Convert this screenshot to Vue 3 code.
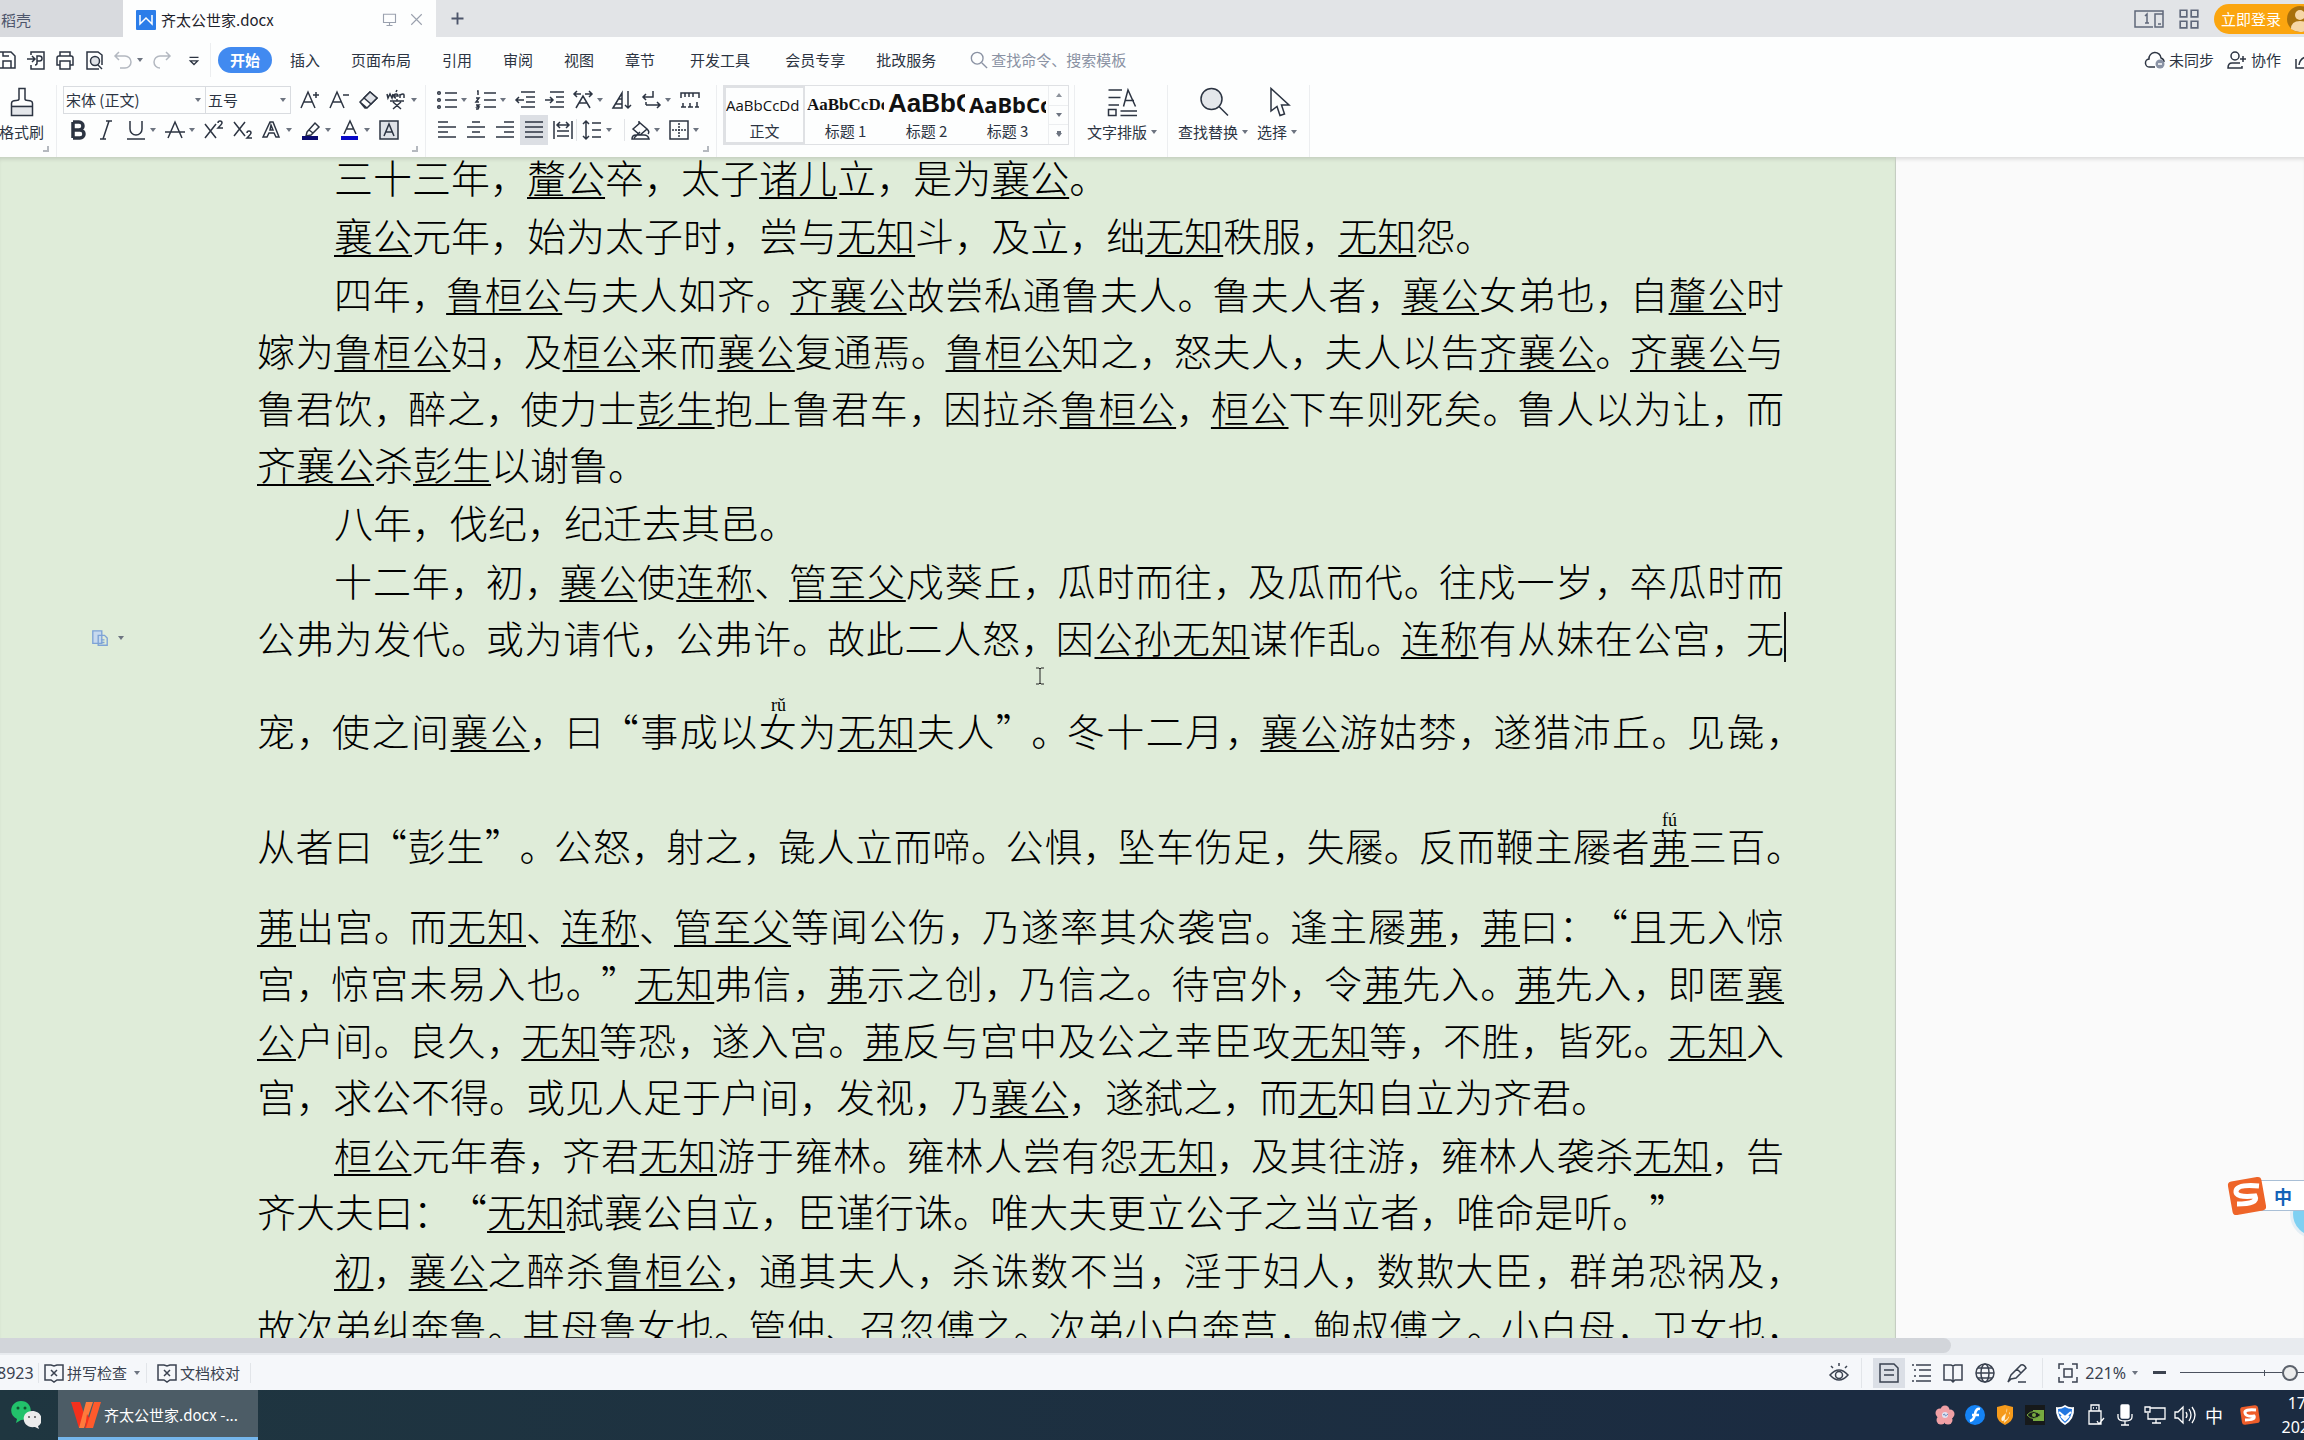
<script setup>
import { h } from 'vue'

const shapes = {
  save: '<path d="M2 2h12l4 4v12H2zM6 18v-7h8v7M6 2v4h6"/>',
  exportPdf: '<path d="M5 5V2h13v17H5v-4M1 9h8M6 6l3 3-3 3M11 6h2.500a2 2 0 010 5H11zM11 11v2a2 2 0 01-2 2"/>',
  print: '<path d="M5 6V2h10v4M5 15H2V8q0-2 2-2h12q2 0 2 2v7h-3M5 11h10v8H5z"/>',
  preview: '<path d="M15 19H3V2h11l4 3v10"/><circle cx="11" cy="11" r="4.500" fill="#dfe2e7"/><path d="M14 15l4 4"/>',
  undo: '<path d="M6 2L2 6l4 4M2 6h10a5.500 5.500 0 010 12H7"/>',
  redo: '<path d="M14 2l4 4-4 4M18 6H8a5.500 5.500 0 000 12"/>',
  more: '<path d="M5 7h10M6 11l4 4 4-4z"/>',
  search: '<circle cx="8" cy="8" r="6.500"/><path d="M13 13l6 6"/>',
  grow: '<path d="M1 18L8 2l7 16M4 12h8M16 2v6M13 5h6"/>',
  shrink: '<path d="M1 18L8 2l7 16M4 12h8M14 5h6"/>',
  eraser: '<path d="M2 12L12 2l7 6L9 18H7zM2 12l7 6"/><path d="M6 8l7 6 6-6-7-6z" fill="#dfe2e7"/>',
  pinyin: '<path d="M0 4l1 4 2-4 2 4 1-4M7 6h4q0-2-2-2t-2 2 2 2M13 8V4M13 5q4-2 4 0v3M9 2l1-2M3 11h14M10 9v2M6 12l8 7M14 12l-8 7"/>',
  bullets: '<path d="M8 3h12M8 10h12M8 17h12"/><circle cx="2" cy="3" r="1.300"/><circle cx="2" cy="10" r="1.300"/><circle cx="2" cy="17" r="1.300"/>',
  numbers: '<path d="M8 3h12M8 10h12M8 17h12M1 1h1v4M0 8h3l-3 4h3M0 15h3l-2 2h2l-1 2H0"/>',
  outdent: '<path d="M6 2h14M11 7h9M11 12h9M6 17h14M1 10h8M4 7l-3 3 3 3"/>',
  indent: '<path d="M6 2h14M12 7h8M12 12h8M6 17h14M1 10h8M6 7l3 3-3 3"/>',
  scaleA: '<path d="M3 18l7-12 7 12M6 13h8M1 4h7M4 1L1 4l3 3M12 4h7M16 1l3 3-3 3"/>',
  sort: '<path d="M1 18L10 3v15zM4 14h6M7 9h3"/><path d="M16 1v17M13 15l3 3 3-3"/>',
  breaks: '<path d="M12 1v6H2M5 4L2 7l3 3M5 15h14M16 12l3 3-3 3M5 12v3"/>',
  ruler: '<path d="M1 8V3h18v5M5 3v4M9 3v4M13 3v4M1 17h5M3 13v4M8 17h5M10 13v4M15 17h4M17 12v5"/>',
  bold: '<path stroke-width="3.500" d="M5 2v16M5 2h6a3.500 3.500 0 010 8H5h7a4 4 0 010 8H5"/>',
  italic: '<path d="M9 1h6M3 19h6M12 1L6 19"/>',
  underline: '<path d="M4 1v8a6 6 0 0012 0V1M1 19h18"/>',
  strike: '<path d="M3 18l7-16 7 16M0 12h20"/>',
  sup: '<path d="M1 4l11 14M12 4L1 18M14 3q0-2 2-2t2 2q0 1-4 5h5"/>',
  sub: '<path d="M1 2l11 14M12 2L1 16M14 13q0-2 2-2t2 2q0 1-4 5h5"/>',
  fx: '<path d="M1 17L8 2h3l6 15h-3l-2-4H7l-2 4zM8 10h3L9 5z"/>',
  marker: '<path d="M6 12l8-9 4 4-8 8-5 1zM8 10l4 3"/><path d="M1 18h16" stroke="#0b0b70" stroke-width="4"/>',
  color: '<path d="M4 14L10 1l6 13M6 9h8"/><path d="M1 18h17" stroke="#0808c8" stroke-width="4"/>',
  boxed: '<path d="M1 1h18v18H1z" fill="#dfe2e7"/><path d="M5 16l5-12 5 12M7 12h6"/>',
  left: '<path d="M1 2h10M1 7h18M1 12h10M1 17h18"/>',
  center: '<path d="M6 2h8M1 7h18M6 12h8M1 17h18"/>',
  right: '<path d="M9 2h10M1 7h18M9 12h10M1 17h18"/>',
  justify: '<path d="M1 2h18M1 7h18M1 12h18M1 17h18"/>',
  distribute: '<path d="M1 1v18M19 1v18M4 11h12M4 16h12M4 5h12M7 2L4 5l3 3M13 2l3 3-3 3"/>',
  spacing: '<path d="M4 1v18M1 4l3-3 3 3M1 16l3 3 3-3M10 3h9M10 10h9M10 17h9"/>',
  shading: '<path d="M3 9l7-6 7 6-7 6zM9 1v4M17 9q3 3 1 5M2 19q0-4 4-4h8q4 0 5 4zM4 18l6-6"/>',
  borders: '<path d="M1 1h18v18H1z"/><path d="M10 3v14M3 10h14" stroke-dasharray="2 1"/>',
  monitor: '<path d="M2 3h16v11H2zM10 14v4M6 18h8"/>',
  close: '<path d="M3 3l14 14M17 3L3 17"/>',
  plus: '<path stroke-width="2.500" d="M10 2v16M2 10h16"/>',
  apps: '<path d="M2 2h6v6H2zM12 2h6v6h-6zM2 12h6v6H2zM12 12h6v6h-6z"/>',
  cloud: '<path d="M10 17H5a4 4 0 01-1-8 6 6 0 0112-1q3 1 3 4"/><circle cx="15" cy="14" r="4.500" fill="#8a93a5" stroke="none"/><path stroke="#fff" d="M13 14h4"/>',
  person: '<circle cx="8" cy="6" r="4"/><path d="M13 13H5q-4 0-4 5h14v-2M13 9h6M16 6v6"/>',
  share: '<path d="M2 9v9h17M5 15q1-9 13-9"/>',
  spell: '<path d="M1 2h6l3 1 3-1h6v15h-6l-3 2-3-2H1z"/><path d="M7 7l6 6M13 7l-6 6"/>',
  eye: '<path d="M1 12q9-10 18 0-9 10-18 0zM10 0v3M2 3l2 2M18 3l-2 2"/><circle cx="10" cy="12" r="3.500"/>',
  page: '<path d="M1 1h14l4 4v14H1zM5 7h10M5 12h10"/>',
  outline: '<path d="M5 2h15M8 7h12M8 13h12M5 18h15M1 2h2M3 7h2M3 13h2M1 18h2"/>',
  book: '<path d="M1 2h7l2 1 2-1h7v15h-7l-2 2-2-2H1zM10 3v15"/>',
  globe: '<circle cx="10" cy="10" r="9"/><ellipse cx="10" cy="10" rx="4" ry="9"/><path d="M1 10h18M3 5h14M3 15h14"/>',
  pen: '<path d="M1 19l3-7L14 2q3-1 5 3L9 15l-5 1zM10 6l4 4M11 19h8"/>',
  fit: '<path d="M1 6V1h5M14 1h5v5M19 14v5h-5M6 19H1v-5M6 6h8v8H6z"/>',
  paste: '<path d="M2 2h10v14H2z" fill="#c7d9ee"/><path d="M8 7h7l3 3v8H8zM11 12h4M11 15h4"/>',
  brush: '<path d="M3 12h14v7H3z" fill="#e4e7eb" stroke="none"/><path d="M8 1h4v7q0 1 2 1 3 0 3 2v8H3v-8q0-2 3-2 2 0 2-1zM3 13h14"/>',
  layout: '<path d="M1 2h9M1 7h8M1 12h7M11 13l3-11 5 11M12 9h6M9 16h11M9 19h11M1 15h5v4H1z"/>',
  find: '<circle cx="9" cy="8" r="7" fill="#e4e7eb"/><path d="M14 13l6 6"/>',
  arrow: '<path d="M6 1v15l4-3 2 6 3-1-2-6h5z"/>',
}

const Icon = (p) =>
  h('svg', { class: 'icon', viewBox: '0 0 20 20', 'aria-hidden': 'true', innerHTML: shapes[p.name] })
Icon.props = ['name']

const quick = [['save', '保存'], ['exportPdf', '输出为PDF'], ['print', '打印'], ['preview', '打印预览']]
const menus = ['插入', '页面布局', '引用', '审阅', '视图', '章节', '开发工具', '会员专享', '批改服务']

const fontTop = [['grow'], ['shrink'], ['eraser'], ['pinyin', 1]]
const fontBottom = [['bold'], ['italic'], ['underline', 1], ['strike', 1], ['sup'], ['sub'], ['fx', 1], ['marker', 1], ['color', 1], ['boxed']]
const paraTop = [['bullets', 1], ['numbers', 1], ['outdent'], ['indent'], ['scaleA', 1], ['sort'], ['breaks', 1], ['ruler']]
const paraBottom = [['left'], ['center'], ['right'], ['justify'], ['distribute'], ['spacing', 2], ['shading', 2], ['borders', 1]]

const styles = [['AaBbCcDd', '正文', 'body'], ['AaBbCcDd', '标题 1', 'h1'], ['AaBbCcDd', '标题 2', 'h2'], ['AaBbCcDd', '标题 3', 'h3']]
const views = [['page', '页面视图'], ['outline', '大纲'], ['book', '阅读版式'], ['globe', 'Web版式'], ['pen', '写作模式']]

// Markup of a line: [name] is underlined, {字|pinyin} carries a phonetic guide.
const paragraphs = [
  ['三十三年，[釐公]卒，太子[诸儿]立，是为[襄公]。'],
  ['[襄公]元年，始为太子时，尝与[无知]斗，及立，绌[无知]秩服，[无知]怨。'],
  [
    '四年，[鲁桓公]与夫人如齐。[齐襄公]故尝私通鲁夫人。鲁夫人者，[襄公]女弟也，自[釐公]时',
    '嫁为[鲁桓公]妇，及[桓公]来而[襄公]复通焉。[鲁桓公]知之，怒夫人，夫人以告[齐襄公]。[齐襄公]与',
    '鲁君饮，醉之，使力士[彭生]抱上鲁君车，因拉杀[鲁桓公]，[桓公]下车则死矣。鲁人以为让，而',
    '[齐襄公]杀[彭生]以谢鲁。',
  ],
  ['八年，伐纪，纪迁去其邑。'],
  [
    '十二年，初，[襄公]使[连称]、[管至父]戍葵丘，瓜时而往，及瓜而代。往戍一岁，卒瓜时而',
    '公弗为发代。或为请代，公弗许。故此二人怒，因[公孙无知]谋作乱。[连称]有从妹在公宫，无',
    '宠，使之间[襄公]，曰“事成以{女|rǔ}为[无知]夫人”。冬十二月，[襄公]游姑棼，遂猎沛丘。见彘，',
    '从者曰“彭生”。公怒，射之，彘人立而啼。公惧，坠车伤足，失屦。反而鞭主屦者[{茀|fú}]三百。',
    '[茀]出宫。而[无知]、[连称]、[管至父]等闻公伤，乃遂率其众袭宫。逢主屦[茀]，[茀]曰：“且无入惊',
    '宫，惊宫未易入也。”[无知]弗信，[茀]示之创，乃信之。待宫外，令[茀]先入。[茀]先入，即匿[襄]',
    '[公]户间。良久，[无知]等恐，遂入宫。[茀]反与宫中及公之幸臣攻[无知]等，不胜，皆死。[无知]入',
    '宫，求公不得。或见人足于户间，发视，乃[襄公]，遂弑之，而[无]知自立为齐君。',
  ],
  [
    '[桓公]元年春，齐君[无知]游于雍林。雍林人尝有怨[无知]，及其往游，雍林人袭杀[无知]，告',
    '齐大夫曰：“[无知]弑襄公自立，臣谨行诛。唯大夫更立公子之当立者，唯命是听。”',
  ],
  [
    '[初]，[襄公]之醉杀[鲁桓公]，通其夫人，杀诛数不当，淫于妇人，数欺大臣，群弟恐祸及，',
    '故次弟纠奔鲁。其母鲁女也。管仲、召忽傅之。次弟小白奔莒，鲍叔傅之。小白母，卫女也，',
  ],
]

const spaceAbove = { 宠: 'rise-m', 从: 'rise-l' }

function parse(text) {
  const out = []
  let name = false
  for (const t of text.match(/\{[^}]+\}|[[\]]|[，。、：”“]|[^{[\]，。、：”“]+/g)) {
    if (t === '[') name = true
    else if (t === ']') name = false
    else if (t[0] === '{') {
      const [base, guide] = t.slice(1, -1).split('|')
      out.push({ t: base, guide, name })
    } else out.push({ t, name, mark: t === '“' ? 'open' : /[，。、：”]/.test(t) ? 'mark' : '' })
  }
  return out
}

const content = paragraphs.map((lines, p) =>
  lines.map((text, i) => ({
    parts: parse(text),
    full: i < lines.length - 1 || p === paragraphs.length - 1,
    rise: spaceAbove[text[0]] || (text.startsWith('[茀]出') ? 'rise-s' : ''),
    caret: text.endsWith('公宫，无'),
  })),
)
</script>

<template>
  <div class="app">
    <header class="tabs">
      <button class="tab idle">稻壳</button>
      <div class="tab active">
        <svg class="wlogo" viewBox="0 0 20 20"><rect width="20" height="20" rx="1" fill="#2b7de9" /><path d="M4 5v9l6-6 6 6V5" fill="none" stroke="#fff" stroke-width="1.500" /></svg>
        <span class="title">齐太公世家.docx</span>
        <button class="mini" aria-label="窗口"><Icon name="monitor" /></button>
        <button class="mini" aria-label="关闭"><Icon name="close" /></button>
      </div>
      <button class="add" aria-label="新建"><Icon name="plus" /></button>
      <div class="account">
        <button class="wide" aria-label="窗口布局">
          <svg viewBox="0 0 30 18" width="30" height="18" fill="none" stroke="#5f677a" stroke-width="1.500"><path d="M19 17H1V1h28v16h-3M21 4h8v13h-8zM24 14h3M11 6l2-2v9M11 13h4" /></svg>
        </button>
        <button class="mini dark" aria-label="应用"><Icon name="apps" /></button>
        <button class="login">立即登录
          <svg viewBox="0 0 26 26" width="26" height="26"><circle cx="13" cy="13" r="13" fill="#a8700c" /><circle cx="13" cy="9" r="5" fill="#f6d6a6" /><path d="M4 23q0-8 9-8t9 8q-9 6-18 0z" fill="#f6d6a6" /></svg>
        </button>
      </div>
    </header>

    <nav class="menu">
      <div class="quick">
        <button v-for="q in quick" :key="q[0]" class="tb" :aria-label="q[1]"><Icon :name="q[0]" /></button>
        <button class="tb dd faint" aria-label="撤销"><Icon name="undo" /><i class="caret"></i></button>
        <button class="tb faint" aria-label="恢复"><Icon name="redo" /></button>
        <button class="tb last" aria-label="更多"><Icon name="more" /></button>
      </div>
      <button class="pill">开始</button>
      <button v-for="m in menus" :key="m" class="item" :class="{ roomy: m === '开发工具' || m === '会员专享' }">{{ m }}</button>
      <label class="find"><Icon name="search" /><input type="text" placeholder="查找命令、搜索模板" aria-label="查找命令" /></label>
      <div class="cloud">
        <button><Icon name="cloud" />未同步</button>
        <button><Icon name="person" />协作</button>
        <button aria-label="分享"><Icon name="share" /></button>
      </div>
    </nav>

    <section class="ribbon">
      <div class="group clip">
        <button class="big"><Icon name="brush" /><span>格式刷</span></button>
        <b class="corner"></b>
      </div>
      <div class="group font">
        <div class="row">
          <div class="combo">
            <span class="pick family"><select aria-label="字体"><option>宋体 (正文)</option></select><i class="caret"></i></span>
            <span class="pick size"><select aria-label="字号"><option>五号</option></select><i class="caret"></i></span>
          </div>
          <button v-for="t in fontTop" :key="t[0]" class="tb" :class="{ dd: t[1] }" :aria-label="t[0]"><Icon :name="t[0]" /><i v-if="t[1]" class="caret"></i></button>
        </div>
        <div class="row lower">
          <button v-for="t in fontBottom" :key="t[0]" class="tb" :class="{ dd: t[1] }" :aria-label="t[0]"><Icon :name="t[0]" /><i v-if="t[1]" class="caret"></i></button>
        </div>
        <b class="corner"></b>
      </div>
      <div class="group para">
        <div class="row">
          <button v-for="t in paraTop" :key="t[0]" class="tb" :class="{ dd: t[1] }" :aria-label="t[0]"><Icon :name="t[0]" /><i v-if="t[1]" class="caret"></i></button>
        </div>
        <div class="row">
          <button v-for="t in paraBottom" :key="t[0]" class="tb" :class="{ dd: t[1], split: t[1] === 2, on: t[0] === 'justify' }" :aria-label="t[0]"><Icon :name="t[0]" /><i v-if="t[1]" class="caret"></i></button>
        </div>
        <b class="corner"></b>
      </div>
      <div class="group gallery-wrap">
        <div class="gallery">
          <button v-for="s in styles" :key="s[1]" class="style" :class="s[2]"><span class="sample">{{ s[0] }}</span><span class="label">{{ s[1] }}</span></button>
          <div class="scroller">
            <button aria-label="上一行"><i class="caret up"></i></button>
            <button aria-label="下一行"><i class="caret"></i></button>
            <button aria-label="展开"><i class="caret bar"></i></button>
          </div>
        </div>
      </div>
      <div class="group type">
        <button class="big"><Icon name="layout" /><span>文字排版<i class="caret"></i></span></button>
      </div>
      <div class="group edit">
        <button class="big"><Icon name="find" /><span>查找替换<i class="caret"></i></span></button>
        <button class="big"><Icon name="arrow" /><span>选择<i class="caret"></i></span></button>
      </div>
    </section>

    <main class="desk">
      <article class="sheet">
        <button class="paste" aria-label="粘贴选项"><Icon name="paste" /><i class="caret"></i></button>
        <div v-for="(p, i) in content" :key="i" class="p">
          <div v-for="(l, j) in p" :key="j" class="line" :class="[l.rise, { full: l.full, first: j === 0 }]"><template v-for="(s, k) in l.parts" :key="k"><ruby v-if="s.guide" :class="{ name: s.name }">{{ s.t }}<rt>{{ s.guide }}</rt></ruby><span v-else :class="[s.mark, { name: s.name }]">{{ s.t }}</span></template><i v-if="l.caret" class="cursor"></i></div>
        </div>
        <svg class="ibeam" viewBox="0 0 8 18" width="8" height="18"><path d="M0 1h3l1 1 1-1h3M0 17h3l1-1 1 1h3M4 2v14" fill="none" stroke="#222" /></svg>
      </article>
      <div class="ime">
        <svg viewBox="0 0 40 40" width="40" height="40"><rect x="3" y="3" width="34" height="34" rx="4" fill="#ee6428" transform="rotate(-10 20 20)" /><path d="M32 10Q10 8 9 15t19 5q4 8-18 8" fill="none" stroke="#fff" stroke-width="5" /></svg>
        <span>中</span>
      </div>
      <div class="bubble"></div>
    </main>

    <div class="hscroll"><div class="thumb"></div></div>

    <footer class="status">
      <span class="count">8923</span>
      <button class="check"><Icon name="spell" />拼写检查<i class="caret"></i></button>
      <button class="check"><Icon name="spell" />文档校对</button>
      <div class="views">
        <button class="view eye" aria-label="护眼模式"><Icon name="eye" /></button>
        <button v-for="v in views" :key="v[0]" class="view" :class="{ on: v[0] === 'page' }" :aria-label="v[1]"><Icon :name="v[0]" /></button>
        <button class="view fit" aria-label="适应窗口"><Icon name="fit" /></button>
        <button class="zoom">221%<i class="caret"></i></button>
        <button class="minus" aria-label="缩小"></button>
        <input class="range" type="range" min="0" max="100" value="62" aria-label="缩放" />
      </div>
    </footer>

    <div class="taskbar">
      <button class="wechat" aria-label="微信">
        <svg viewBox="0 0 30 28" width="30" height="28"><path d="M10 0c13 0 13 19 0 19l-5 3 1-4C-4 13 0 0 10 0z" fill="#22c26b" /><circle cx="7" cy="7" r="1.500" fill="#11552f" /><circle cx="14" cy="7" r="1.500" fill="#11552f" /><path d="M21 10c11 0 12 12 6 15l1 3-4-2c-14 2-15-16-3-16z" fill="#ececec" /><circle cx="18" cy="16" r="1" fill="#555" /><circle cx="24" cy="16" r="1" fill="#555" /></svg>
      </button>
      <button class="task">
        <svg viewBox="0 0 30 28" width="30" height="28"><path d="M0 1h9l6 17-2 9H8z" fill="#f5301d" /><path d="M15 1h7l-9 26H8z" fill="#ff7a3c" /><path d="M16 13l4 7-2 7h-4z" fill="#f5301d" /><path d="M23 1h7l-8 26h-7z" fill="#ff5a2c" /></svg>
        <span>齐太公世家.docx -...</span>
      </button>
      <div class="tray">
        <svg viewBox="0 0 20 20"><g fill="#f0a0a5"><circle cx="10" cy="5" r="4.500" /><circle cx="15" cy="9" r="4.500" /><circle cx="13" cy="15" r="4.500" /><circle cx="6" cy="15" r="4.500" /><circle cx="5" cy="8" r="4.500" /></g><circle cx="10" cy="10" r="3" fill="#dfe3f2" /><path d="M8 10q2-2 2 0t3-1" stroke="#6a86b8" fill="none" /></svg>
        <svg viewBox="0 0 20 20"><circle cx="10" cy="10" r="10" fill="#1583f5" /><path d="M15 4q-4-1-5 5t-5 7M7 10h7" stroke="#fff" stroke-width="2.500" fill="none" /></svg>
        <svg viewBox="0 0 20 20"><path d="M2 2l8-2 8 2v9q0 5-8 9-8-4-8-9z" fill="#f59a1b" /><path d="M12 3q1 4-3 7t-2 6q7-1 8-8l-1-1q2 6-5 11" fill="#fff3d8" /></svg>
        <svg viewBox="0 0 20 20"><rect width="20" height="20" fill="#16191a" /><path d="M8 5h11v11H8z" fill="#76a940" /><path d="M2 10q6-7 14 0-8 7-14 0z" fill="#16191a" stroke="#76a940" /><circle cx="9" cy="10" r="2" fill="#76a940" /></svg>
        <svg viewBox="0 0 20 20"><path d="M1 2q5 1 9-2 4 3 9 2 1 12-9 18Q0 14 1 2z" fill="#fff" /><path d="M3 4q4 0 7-2 3 2 7 2 0 9-7 14Q3 13 3 4z" fill="#2277e0" /><path d="M4 7l6 5 6-5M6 11l4 4 4-4" stroke="#fff" stroke-width="2" fill="none" /></svg>
        <svg viewBox="0 0 20 20" class="line-art"><path d="M6 6V0h8v6M4 6h12v13H4zM8 3h1M11 3h1M12 16l2 3 5-6" /></svg>
        <svg viewBox="0 0 20 20" class="line-art"><rect x="6" y="0" width="8" height="13" rx="1" fill="#fff" /><path d="M3 9v3q0 4 7 4t7-4V9M10 16v4M6 20h8" /></svg>
        <svg viewBox="0 0 20 20" class="line-art"><path d="M5 3h15v11H3V8M0 2h5v5H0zM11 14v4M7 18h9" /></svg>
        <svg viewBox="0 0 20 20" class="line-art"><path d="M0 7h3l5-5v16l-5-5H0zM11 7q2 3 0 6M14 4q4 6 0 12M17 2q6 8 0 16" /></svg>
        <span class="lang">中</span>
        <svg viewBox="0 0 20 20" class="sogou"><rect x="1" y="1" width="18" height="18" rx="3" fill="#ee5d2a" transform="rotate(-8 10 10)" /><path d="M16 5Q4 4 5 8t9 3q2 4-9 4" fill="none" stroke="#fff" stroke-width="3" /></svg>
        <div class="clock"><span>17</span><span>202</span></div>
      </div>
    </div>
  </div>
</template>

<style>
body {
  margin: 0;
  overflow: hidden;
}
</style>

<style scoped>
.app {
  display: flex;
  flex-direction: column;
  height: 100vh;
  overflow: hidden;
  font: 15px/20px "Noto Sans CJK SC", sans-serif;
  color: #2c3442;
  background: #fdfefe;
}
button, input, select {
  font: inherit;
  color: inherit;
  border: 0;
  padding: 0;
  margin: 0;
  background: none;
  outline: 0;
  white-space: nowrap;
}
button {
  display: flex;
  align-items: center;
  flex: none;
}
:deep(.icon) {
  width: 20px;
  height: 20px;
  flex: none;
  fill: none;
  stroke: currentColor;
  stroke-width: 1.5;
  overflow: visible;
}
.caret {
  flex: none;
  display: inline-block;
  border: 3px solid transparent;
  border-top: 4px solid #6d7480;
  border-bottom: 0;
}
.caret.up {
  border-top: 0;
  border-bottom: 4px solid #8d939c;
}
.caret.bar {
  box-shadow: 0 -3px 0 -1px #6d7480;
}

.tabs {
  display: flex;
  flex: none;
  height: 37px;
  background: #e2e4e7;
}
.tab {
  display: flex;
  align-items: center;
  box-sizing: border-box;
}
.tab.idle {
  width: 123px;
  padding: 2px 0 0 1px;
  background: #d8dade;
  color: #4d556b;
}
.tab.active {
  width: 313px;
  padding: 2px 12px 0 13px;
  background: #fdfefe;
  color: #1d222b;
}
.wlogo {
  width: 20px;
  height: 20px;
  margin-right: 5px;
}
.title {
  flex: 1;
}
.mini {
  margin-left: 12px;
  color: #9aa1ae;
}
.mini :deep(.icon) {
  width: 15px;
  height: 15px;
}
.mini.dark {
  margin: 0;
  color: #5f677a;
}
.mini.dark :deep(.icon) {
  width: 22px;
  height: 22px;
}
.add {
  margin-left: 14px;
  color: #4d556b;
}
.add :deep(.icon) {
  width: 15px;
  height: 15px;
}
.account {
  display: flex;
  align-items: center;
  margin-left: auto;
  gap: 14px;
}
.login {
  height: 30px;
  padding: 0 0 0 7px;
  gap: 6px;
  border-radius: 15px 0 0 15px;
  background: #fba50f;
  color: #fff;
  margin-right: -9px;
}

.menu {
  display: flex;
  flex: none;
  align-items: center;
  height: 46px;
}
.quick {
  display: flex;
  align-items: center;
  gap: 9px;
  width: 214px;
  margin: 0 7px 0 -3px;
  box-sizing: border-box;
  border-right: 1px solid #eceef0;
  height: 34px;
}
.tb {
  width: 20px;
  height: 22px;
}
.tb.dd {
  width: 30px;
  gap: 4px;
}
.faint {
  color: #b3b8c0;
}
.last {
  margin-left: 4px;
}
.last :deep(.icon) {
  width: 18px;
  height: 18px;
}
.pill {
  height: 26px;
  padding: 0 12px;
  margin-right: 3px;
  border-radius: 13px;
  background: #418af0;
  color: #fff;
  font-weight: 700;
}
.item {
  padding: 0 15px;
  margin-right: 1px;
}
.item.roomy {
  margin-left: 4px;
}
.find {
  display: flex;
  align-items: center;
  gap: 3px;
  margin-left: 18px;
  color: #8a92a3;
}
.find :deep(.icon) {
  width: 18px;
  height: 18px;
}
.find input {
  width: 180px;
}
.find input::placeholder {
  color: #8a92a3;
  opacity: 1;
}
.cloud {
  display: flex;
  gap: 13px;
  margin-left: auto;
  margin-right: -10px;
}
.cloud button {
  gap: 4px;
}

.ribbon {
  display: flex;
  flex: none;
  height: 74px;
  padding-top: 2px;
  box-sizing: border-box;
}
.group {
  position: relative;
  display: flex;
  flex: none;
  box-sizing: border-box;
  border-right: 1px solid #eceef0;
}
.corner {
  position: absolute;
  right: 7px;
  bottom: 5px;
  width: 4px;
  height: 4px;
  border: solid #b5b9bf;
  border-width: 0 2px 2px 0;
}
.clip {
  width: 57px;
}
.clip .big {
  margin-left: -1px;
}
.big {
  flex-direction: column;
  gap: 5px;
  padding-top: 2px;
}
.big :deep(.icon) {
  width: 30px;
  height: 30px;
  stroke-width: 1;
}
.big span {
  display: flex;
  align-items: center;
}
.big .caret {
  margin-left: 4px;
}
.font, .para {
  flex-direction: column;
}
.font {
  width: 369px;
  padding-left: 6px;
}
.para {
  width: 291px;
  padding-left: 11px;
}
.row {
  display: flex;
  align-items: center;
  gap: 9px;
  height: 30px;
}
.row.lower {
  padding-left: 5px;
}
.combo {
  display: flex;
  width: 228px;
  height: 28px;
  border: 1px solid #d9dce0;
  box-sizing: border-box;
}
.pick {
  display: flex;
  align-items: center;
  padding: 0 4px 0 2px;
}
.pick select {
  flex: 1;
  appearance: none;
}
.family {
  flex: 1;
  border-right: 1px solid #d9dce0;
}
.size {
  width: 78px;
}
.tb.on {
  background: #dcdfe4;
  box-shadow: 0 0 0 4px #dcdfe4;
}
.split {
  position: relative;
}
.split::before {
  content: "";
  position: absolute;
  left: -6px;
  height: 22px;
  border-left: 1px solid #e2e4e7;
}
.split + .split {
  margin-left: 9px;
}
.gallery-wrap {
  width: 358px;
  padding-left: 6px;
}
.gallery {
  display: flex;
  width: 346px;
  height: 60px;
  border: 1px solid #dfe1e4;
  box-sizing: border-box;
}
.style {
  flex-direction: column;
  width: 81px;
  padding: 0 2px;
  box-sizing: border-box;
  overflow: hidden;
}
.sample {
  display: block;
  width: 100%;
  height: 36px;
  overflow: hidden;
  text-align: left;
  line-height: 36px;
  color: #111;
}
.style.body {
  border: 2px solid #dfe1e4;
  padding: 0;
}
.body .sample {
  height: 34px;
  font: 15px/34px "Open Sans", sans-serif;
}
.h1 .sample {
  font: bold 17px/38px "Liberation Serif", serif;
}
.h2 .sample {
  font: bold 26px/34px "Liberation Sans", sans-serif;
}
.h3 .sample {
  font: bold 22px/36px "Noto Sans", sans-serif;
}
.label {
  line-height: 18px;
}
.scroller {
  display: flex;
  flex: 1;
  flex-direction: column;
  border-left: 1px solid #eceef0;
}
.scroller button {
  flex: 1;
  justify-content: center;
}
.scroller button + button {
  border-top: 1px solid #eceef0;
}
.type {
  width: 93px;
  padding-left: 12px;
}
.edit {
  width: 142px;
  padding-left: 10px;
  gap: 9px;
}

.desk {
  position: relative;
  flex: 1;
  min-height: 0;
  overflow: hidden;
  background: #fafafa;
  box-shadow: inset 0 4px 4px -2px #0002;
}
.sheet {
  position: relative;
  width: 82.3%;
  height: 100%;
  box-sizing: border-box;
  padding: 0 111px 0 257px;
  background: #dfecd9;
  border-right: 1px solid #c5cdc2;
  overflow: hidden;
  color: #000;
  font-weight: 300;
  box-shadow: inset 0 4px 4px -2px #0002;
}
.p {
  margin-bottom: 1px;
}
.p:first-of-type {
  margin-top: -9px;
}
.line {
  position: relative;
  height: 57px;
  font-size: 39px;
  line-height: 57px;
  white-space: nowrap;
  text-spacing-trim: space-all;
}
.line.full {
  font-size: 38px;
  text-align-last: justify;
}
.line.first {
  padding-left: 77px;
}
.rise-s {
  padding-top: 23px;
}
.rise-m {
  padding-top: 36px;
}
.rise-l {
  padding-top: 58px;
}
.mark {
  margin-right: -2px;
}
.open {
  margin-left: -2px;
}
.full .mark {
  margin-right: -4px;
}
.full .open {
  margin-left: -4px;
}
.full .mark:last-child {
  margin-right: -20px;
}
.name {
  text-decoration: underline 2px;
  text-underline-offset: 4px;
  text-decoration-skip-ink: none;
}
ruby {
  display: inline;
  position: relative;
}
rt {
  display: block;
  position: absolute;
  left: 0;
  top: -6px;
  width: 100%;
  font: 18px/18px "Liberation Serif", serif;
  text-align: center;
  text-align-last: center;
}
.cursor {
  position: absolute;
  right: -2px;
  top: 4px;
  height: 50px;
  border-left: 2px solid #111;
}
.ibeam {
  position: absolute;
  left: 1036px;
  top: 510px;
}
.paste {
  position: absolute;
  left: 91px;
  top: 472px;
  gap: 9px;
  color: #7ea3d6;
}
.paste :deep(.icon) {
  width: 18px;
  height: 18px;
}
.ime {
  position: absolute;
  right: 0;
  top: 1023px;
  display: flex;
  align-items: center;
  width: 57px;
  height: 31px;
  border: 1px solid #a9bfd6;
  border-right: 0;
  box-sizing: border-box;
  background: #fff;
  color: #1462b8;
  font-size: 18px;
  font-weight: 700;
  z-index: 1;
}
.ime svg {
  flex: none;
  margin-left: -21px;
  margin-right: 7px;
}
.bubble {
  position: absolute;
  right: -36px;
  top: 1032px;
  width: 44px;
  height: 44px;
  border: 3px solid #e4eef5;
  border-radius: 50%;
  background: #7fd0f2;
}

.hscroll {
  flex: none;
  height: 17px;
  background: #e8ebef;
}
.thumb {
  width: 84.7%;
  height: 15px;
  border-radius: 0 8px 8px 0;
  background: #d2d5da;
}
.status {
  display: flex;
  flex: none;
  align-items: center;
  height: 35px;
  background: #f5f7fa;
  color: #3a4250;
}
.count {
  width: 38px;
  margin-left: -3px;
  font: 16px/20px "Noto Sans", sans-serif;
  border-right: 1px solid #e2e5e9;
  padding-right: 3px;
}
.check {
  gap: 3px;
  padding-left: 5px;
  padding-right: 6px;
  border-right: 1px solid #e2e5e9;
}
.check .caret {
  margin-left: 4px;
}
.check + .check {
  padding-left: 10px;
  padding-right: 10px;
}
.views {
  display: flex;
  align-items: center;
  margin-left: auto;
  margin-right: -56px;
}
.view {
  height: 30px;
  padding: 0 6px;
}
.view.on {
  background: #dbdfe6;
}
.view.eye {
  padding-right: 12px;
  margin-right: 11px;
  border-right: 1px solid #e2e5e9;
}
.view.fit {
  padding-left: 15px;
  margin-left: 9px;
  border-left: 1px solid #e2e5e9;
}
.zoom {
  gap: 6px;
  margin-left: 1px;
  font: 16px/20px "Noto Sans", sans-serif;
}
.minus {
  width: 13px;
  height: 3px;
  margin: 0 14px 0 15px;
  background: #3c434f;
}
.range {
  appearance: none;
  width: 180px;
  height: 20px;
  background:
    linear-gradient(#4b525e, #4b525e) 84px 7px / 1px 6px no-repeat,
    linear-gradient(#4b525e, #4b525e) 0 9px / 100% 1px no-repeat;
}
.range::-webkit-slider-thumb {
  appearance: none;
  width: 16px;
  height: 16px;
  box-sizing: border-box;
  border: 2px solid #5c626c;
  border-radius: 50%;
  background: #eceded;
}

.taskbar {
  display: flex;
  flex: none;
  align-items: center;
  height: 50px;
  background: linear-gradient(90deg, #1f3640, #1b2b41 80%);
  color: #fff;
  font-size: 16px;
}
.wechat {
  width: 58px;
  padding-left: 11px;
}
.task {
  width: 200px;
  height: 50px;
  box-sizing: border-box;
  padding: 3px 0 0 13px;
  gap: 3px;
  background: #4c5c66;
  border-bottom: 3px solid #75b6ec;
  font-size: 15px;
}
.tray {
  display: flex;
  align-items: center;
  gap: 10px;
  margin-left: auto;
}
.tray svg {
  width: 20px;
  height: 20px;
  overflow: visible;
}
.line-art {
  fill: none;
  stroke: #fff;
  stroke-width: 1.3;
}
.lang {
  width: 20px;
  font-size: 18px;
}
.sogou {
  margin-left: 5px;
}
.clock {
  display: flex;
  flex-direction: column;
  align-items: flex-end;
  width: 39px;
  margin-right: -5px;
  font: 16px/24px "Noto Sans", sans-serif;
}
.clock span:first-child {
  margin-right: 3px;
}
</style>
